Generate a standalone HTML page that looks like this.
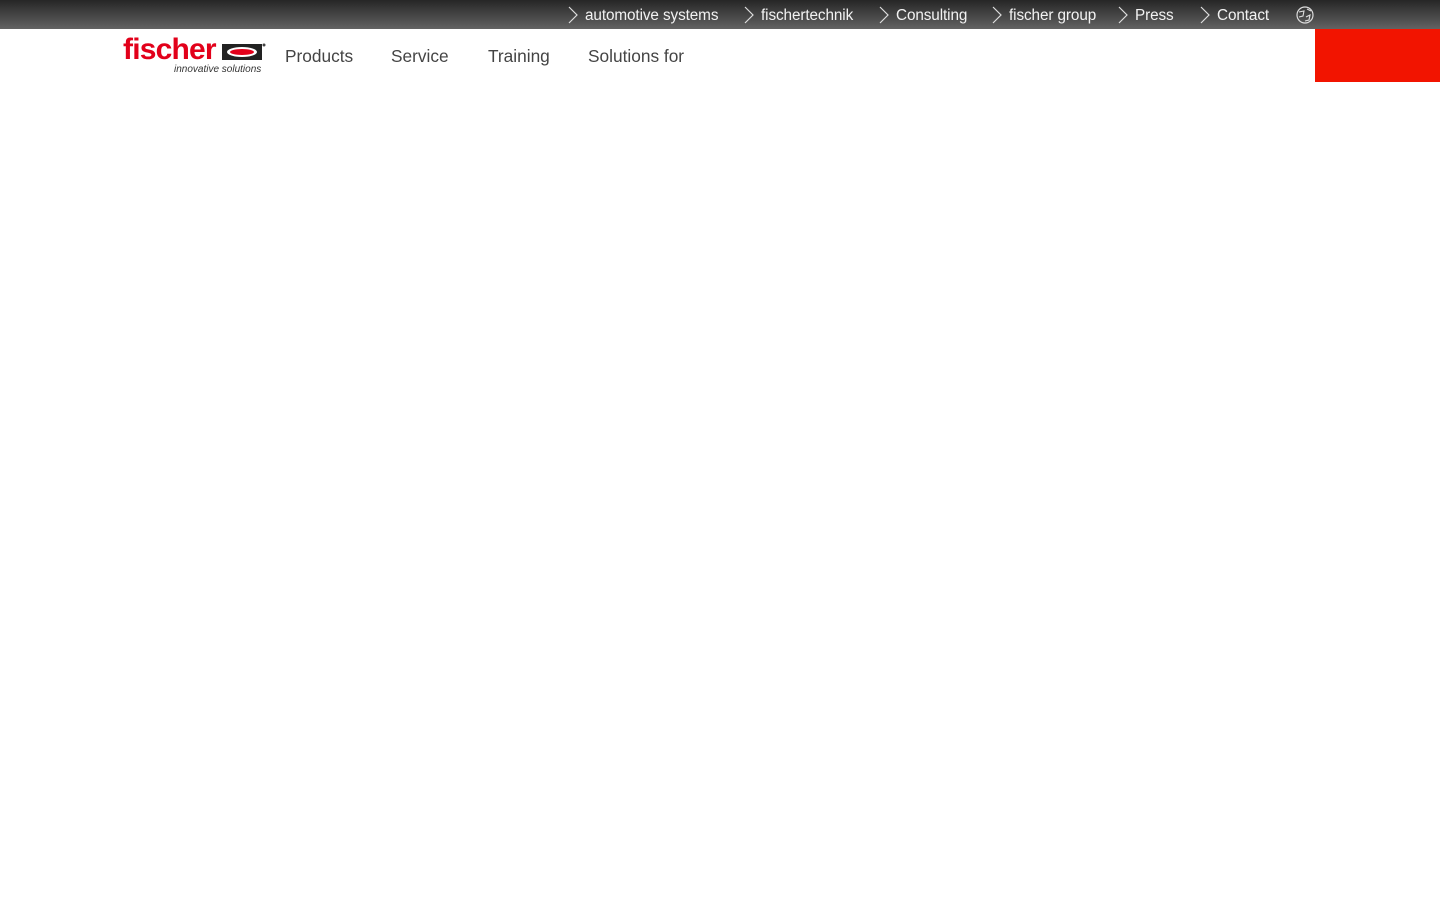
<!DOCTYPE html>
<html><head><meta charset="utf-8"><style>
body{margin:0;width:1440px;height:900px;background:#fff;font-family:"Liberation Sans",Arial,sans-serif;position:relative;overflow:hidden}
.top{position:absolute;left:0;top:0;width:1440px;height:29px;background:linear-gradient(#262626,#4a4a4a 60%,#636363)}
.tl{position:absolute;top:6px;color:#f2f2f2;font-size:15.3px;line-height:20px;white-space:nowrap;letter-spacing:-0.1px}
.tl svg{position:absolute;left:-19px;top:0px}
.red{position:absolute;left:1315px;top:29px;width:125px;height:53px;background:#f21400}
.nav{position:absolute;top:46px;font-size:17.3px;color:#444;line-height:20px}
.logo{position:absolute;left:123px;top:33px;color:#e2001a;font-weight:bold;font-size:30px;letter-spacing:-0.8px;line-height:34px}
.sub{position:absolute;left:174px;top:64px;font-style:italic;font-size:10px;color:#333}
</style></head><body>
<div class="top"></div>
<div class="tl" style="left:585px"><svg width="14" height="18"><path d="M3 1 L11 9 L3 17" stroke="#ddd" fill="none" stroke-width="1.2"/></svg>automotive systems</div>
<div class="tl" style="left:761px"><svg width="14" height="18"><path d="M3 1 L11 9 L3 17" stroke="#ddd" fill="none" stroke-width="1.2"/></svg>fischertechnik</div>
<div class="tl" style="left:896px"><svg width="14" height="18"><path d="M3 1 L11 9 L3 17" stroke="#ddd" fill="none" stroke-width="1.2"/></svg>Consulting</div>
<div class="tl" style="left:1009px"><svg width="14" height="18"><path d="M3 1 L11 9 L3 17" stroke="#ddd" fill="none" stroke-width="1.2"/></svg>fischer group</div>
<div class="tl" style="left:1135px"><svg width="14" height="18"><path d="M3 1 L11 9 L3 17" stroke="#ddd" fill="none" stroke-width="1.2"/></svg>Press</div>
<div class="tl" style="left:1217px"><svg width="14" height="18"><path d="M3 1 L11 9 L3 17" stroke="#ddd" fill="none" stroke-width="1.2"/></svg>Contact</div>
<svg style="position:absolute;left:1295px;top:6px" width="20" height="18"><circle cx="10" cy="9" r="8" stroke="#ddd" fill="none" stroke-width="1.2"/><path d="M4 6 L9 5 L8 10 L4 11 M11 11 L15 9 L14 14 L10 15 M12 3 L16 5" stroke="#ddd" fill="none" stroke-width="1.1"/></svg>
<div class="red"></div>
<div class="logo">fischer</div>
<svg style="position:absolute;left:222px;top:43px" width="44" height="18"><rect x="0" y="1" width="40" height="16" fill="#222"/><ellipse cx="20" cy="9" rx="15" ry="5" fill="#fff"/><ellipse cx="20" cy="9" rx="12" ry="3" fill="#e2001a"/><circle cx="42" cy="2" r="1.5" fill="#444"/></svg>
<div class="sub">innovative solutions</div>
<div class="nav" style="left:285px">Products</div>
<div class="nav" style="left:391px">Service</div>
<div class="nav" style="left:488px">Training</div>
<div class="nav" style="left:588px">Solutions for</div>
</body></html>
